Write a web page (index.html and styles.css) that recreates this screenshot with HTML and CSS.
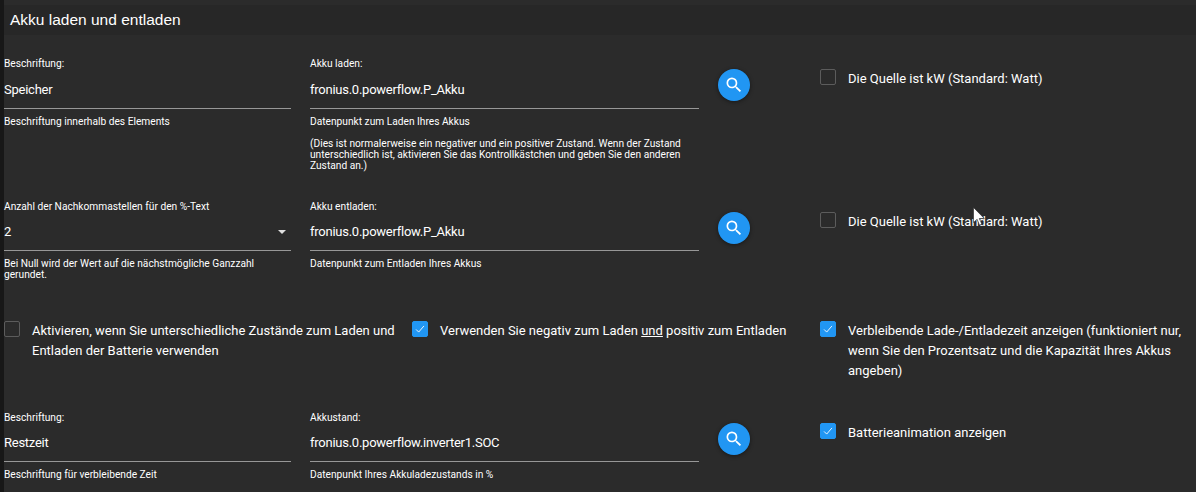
FILE: index.html
```html
<!DOCTYPE html>
<html lang="de">
<head>
<meta charset="utf-8">
<title>Akku laden und entladen</title>
<link rel="stylesheet" href="styles.css">
</head>
<body>
<div class="page">
  <header class="head"><h1 class="title">Akku laden und entladen</h1></header>
  <main class="form">
    <section class="row row-a">
      <div class="field col1">
        <label class="lab">Beschriftung:</label>
        <div class="val">Speicher</div>
        <p class="help">Beschriftung innerhalb des Elements</p>
      </div>
      <div class="field col2">
        <label class="lab">Akku laden:</label>
        <div class="val">fronius.0.powerflow.P_Akku</div>
        <p class="help">Datenpunkt zum Laden Ihres Akkus</p>
        <p class="help note">(Dies ist normalerweise ein negativer und ein positiver Zustand. Wenn der Zustand unterschiedlich ist, aktivieren Sie das Kontrollkästchen und geben Sie den anderen Zustand an.)</p>
      </div>
      <div class="btncell"><button class="fab"><svg viewBox="0 0 24 24" class="ico"><path d="M15.5 14h-.79l-.28-.27A6.47 6.47 0 0 0 16 9.5 6.5 6.5 0 1 0 9.5 16c1.61 0 3.09-.59 4.23-1.57l.27.28v.79l5 4.99L20.49 19l-4.99-5zm-6 0C7.01 14 5 11.99 5 9.5S7.01 5 9.5 5 14 7.01 14 9.5 11.99 14 9.5 14z"/></svg></button></div>
      <div class="chk col4"><span class="box"></span><span class="txt">Die Quelle ist kW (Standard: Watt)</span></div>
    </section>
    <section class="row row-b">
      <div class="field col1">
        <label class="lab">Anzahl der Nachkommastellen für den %-Text</label>
        <div class="val sel">2<span class="arrow"></span></div>
        <p class="help">Bei Null wird der Wert auf die nächstmögliche Ganzzahl gerundet.</p>
      </div>
      <div class="field col2">
        <label class="lab">Akku entladen:</label>
        <div class="val">fronius.0.powerflow.P_Akku</div>
        <p class="help">Datenpunkt zum Entladen Ihres Akkus</p>
      </div>
      <div class="btncell"><button class="fab"><svg viewBox="0 0 24 24" class="ico"><path d="M15.5 14h-.79l-.28-.27A6.47 6.47 0 0 0 16 9.5 6.5 6.5 0 1 0 9.5 16c1.61 0 3.09-.59 4.23-1.57l.27.28v.79l5 4.99L20.49 19l-4.99-5zm-6 0C7.01 14 5 11.99 5 9.5S7.01 5 9.5 5 14 7.01 14 9.5 11.99 14 9.5 14z"/></svg></button></div>
      <div class="chk col4"><span class="box"></span><span class="txt">Die Quelle ist kW (Standard: Watt)</span></div>
    </section>
    <section class="row-c">
      <div class="chk c-a"><span class="box"></span><span class="txt">Aktivieren, wenn Sie unterschiedliche Zustände zum Laden und Entladen der Batterie verwenden</span></div>
      <div class="chk c-b"><span class="box on"><svg viewBox="0 0 16 16" class="tick"><path d="M3.5 8.5l3 3 6-7"/></svg></span><span class="txt">Verwenden Sie negativ zum Laden <u>und</u> positiv zum Entladen</span></div>
      <div class="chk c-c"><span class="box on"><svg viewBox="0 0 16 16" class="tick"><path d="M3.5 8.5l3 3 6-7"/></svg></span><span class="txt">Verbleibende Lade-/Entladezeit anzeigen (funktioniert nur, wenn Sie den Prozentsatz und die Kapazität Ihres Akkus angeben)</span></div>
    </section>
    <section class="row row-d">
      <div class="field col1">
        <label class="lab">Beschriftung:</label>
        <div class="val">Restzeit</div>
        <p class="help">Beschriftung für verbleibende Zeit</p>
      </div>
      <div class="field col2">
        <label class="lab">Akkustand:</label>
        <div class="val">fronius.0.powerflow.inverter1.SOC</div>
        <p class="help">Datenpunkt Ihres Akkuladezustands in %</p>
      </div>
      <div class="btncell"><button class="fab"><svg viewBox="0 0 24 24" class="ico"><path d="M15.5 14h-.79l-.28-.27A6.47 6.47 0 0 0 16 9.5 6.5 6.5 0 1 0 9.5 16c1.61 0 3.09-.59 4.23-1.57l.27.28v.79l5 4.99L20.49 19l-4.99-5zm-6 0C7.01 14 5 11.99 5 9.5S7.01 5 9.5 5 14 7.01 14 9.5 11.99 14 9.5 14z"/></svg></button></div>
      <div class="chk col4"><span class="box on"><svg viewBox="0 0 16 16" class="tick"><path d="M3.5 8.5l3 3 6-7"/></svg></span><span class="txt">Batterieanimation anzeigen</span></div>
    </section>
  </main>
  <svg class="cursor" viewBox="0 0 12 19"><path d="M.5.5v15l3.6-3.2 2.4 5.8 2.3-1-2.5-5.6h5z"/></svg>
</div>
</body>
</html>
```

FILE: styles.css
```css
* { box-sizing: border-box; }
html, body { margin: 0; height: 100%; }
body { background: #2b2b2b; color: #fff; font-family: Roboto, "Liberation Sans", sans-serif; overflow: hidden; }
.page { position: relative; width: 1196px; height: 492px; padding-top: 5px; background: #2b2b2b; border-left: 4px solid #171717; }
.head { height: 30px; background: #272727; padding-left: 6px; }
.title { margin: 0; font-family: "Liberation Sans", sans-serif; font-size: 15.5px; font-weight: 400; line-height: 30px; }
.form { padding-top: 23px; }
.row { display: grid; grid-template-columns: 287px 19px 389px 19px 32px 70px 1fr; }
.col1 { grid-column: 1; }
.col2 { grid-column: 3; }
.btncell { grid-column: 5; padding-top: 11px; }
.col4 { grid-column: 7; padding-top: 11px; }
.row-a { height: 143px; }
.row-b { height: 120px; }
.row-c { display: grid; grid-template-columns: 408px 408px 1fr; height: 91px; }
.c-a { padding-right: 14px; }
.lab { display: block; font-size: 10.2px; line-height: 12px; height: 12px; }
.val { display: flex; align-items: flex-end; position: relative; height: 38px; padding-bottom: 9px; font-size: 13px; letter-spacing: -.25px; line-height: 18px; border-bottom: 1px solid #979797; }
.row-a .val { height: 39px; }
.arrow { position: absolute; right: 5px; bottom: 16px; border: 4px solid transparent; border-top-color: #e0e0e0; border-bottom: 0; }
.help { margin: 7px 0 0; font-size: 10.2px; line-height: 11px; }
.note { margin-top: 11px; }
.fab { display: flex; align-items: center; justify-content: center; width: 32px; height: 32px; padding: 0; border: 0; border-radius: 50%; background: #2196f3; box-shadow: 0 1px 4px rgba(0,0,0,.45); }
.ico { width: 20px; height: 20px; fill: #fff; }
.chk { display: flex; align-items: flex-start; gap: 12px; }
.box { flex: none; width: 16px; height: 16px; border: 1px solid #5c5c5c; border-radius: 2px; }
.box.on { background: #2196f3; border-color: #2196f3; }
.tick { display: block; width: 14px; height: 14px; fill: none; stroke: #fff; stroke-width: 1; }
.txt { font-size: 13px; line-height: 20px; }
.cursor { position: absolute; left: 969px; top: 207px; width: 12px; height: 19px; fill: #fff; stroke: #222; stroke-width: .6; }
```
